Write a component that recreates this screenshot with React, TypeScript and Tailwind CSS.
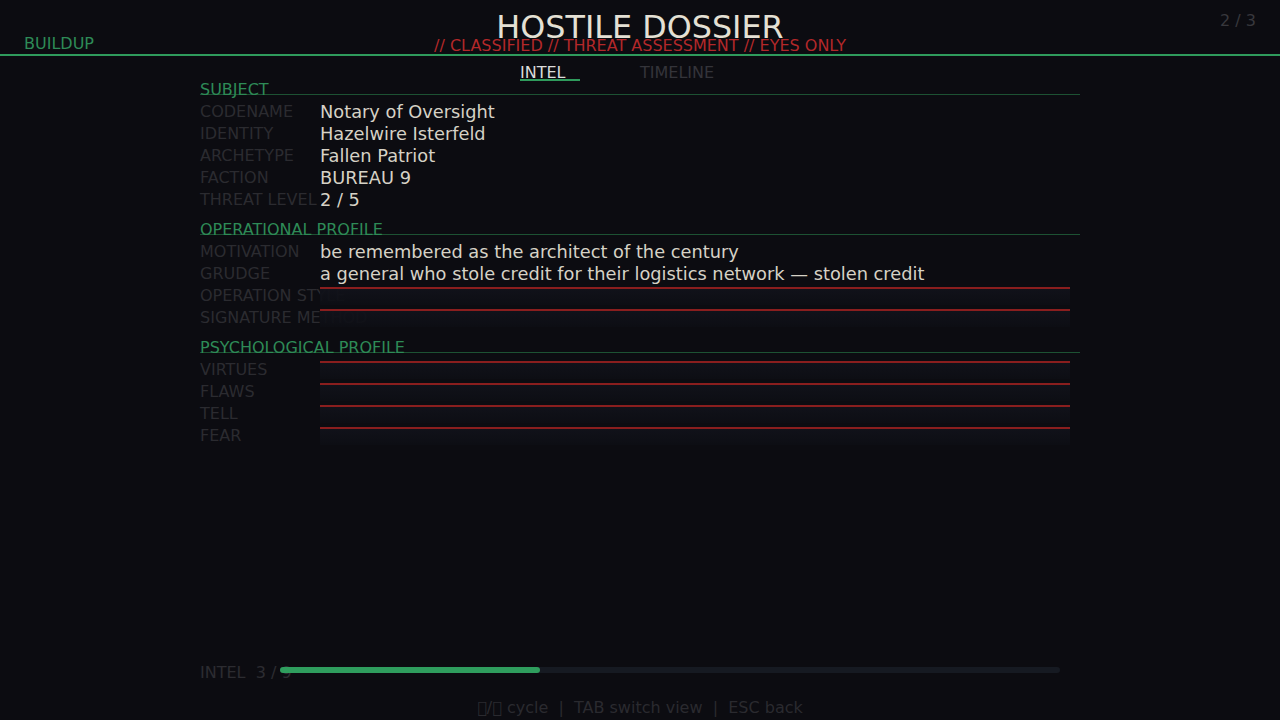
import React from "react";

type Row = { label: string; value?: string };
type Section = { title: string; rows: Row[] };

const sections: Section[] = [
  {
    title: "SUBJECT",
    rows: [
      { label: "CODENAME", value: "Notary of Oversight" },
      { label: "IDENTITY", value: "Hazelwire Isterfeld" },
      { label: "ARCHETYPE", value: "Fallen Patriot" },
      { label: "FACTION", value: "BUREAU 9" },
      { label: "THREAT LEVEL", value: "2 / 5" },
    ],
  },
  {
    title: "OPERATIONAL PROFILE",
    rows: [
      { label: "MOTIVATION", value: "be remembered as the architect of the century" },
      { label: "GRUDGE", value: "a general who stole credit for their logistics network \u2014 stolen credit" },
      { label: "OPERATION STYLE" },
      { label: "SIGNATURE METHOD" },
    ],
  },
  {
    title: "PSYCHOLOGICAL PROFILE",
    rows: [{ label: "VIRTUES" }, { label: "FLAWS" }, { label: "TELL" }, { label: "FEAR" }],
  },
];

function DossierRow({ row }: { row: Row }) {
  return (
    <div className="flex h-[22px] leading-[22px]">
      <div className="w-[120px] shrink-0 whitespace-nowrap text-[#2b2b30]">{row.label}</div>
      {row.value ? (
        <div className="flex-1 whitespace-nowrap text-[17.8px] text-[#d6d2c6]">{row.value}</div>
      ) : (
        // empty field: sits over any label overflow
        <div className="relative mt-[2px] mr-[10px] h-[18px] flex-1 border-t-2 border-[#8a1e1e] bg-gradient-to-b from-[#11121a]/95 to-[#0d0e14]/90" />
      )}
    </div>
  );
}

export default function App() {
  return (
    <div
      className="flex h-screen w-full flex-col overflow-hidden bg-[#0c0c11] text-[16px]"
      style={{ fontFamily: '"DejaVu Sans", Verdana, sans-serif' }}
    >
      <header className="flex h-[56px] shrink-0 border-b-2 border-[#2f9b5c]">
        <div className="w-[200px] pl-6 pt-[36px] leading-none text-[#2e8b57]">BUILDUP</div>
        <div className="flex flex-1 flex-col items-center pt-[11px]">
          <div className="text-[31.8px] leading-none text-[#e4e0d4]">HOSTILE DOSSIER</div>
          <div className="-mt-[5px] leading-none text-[#b3282a]">
            // CLASSIFIED // THREAT ASSESSMENT // EYES ONLY
          </div>
        </div>
        <div className="w-[200px] pr-6 pt-[13px] text-right leading-none text-[#38383d]">2 / 3</div>
      </header>

      <div className="mt-[10px] flex h-[15px] items-start justify-center">
        <div className="w-[120px]">
          <div className="w-[60px] border-b-2 border-[#2f9b5c] leading-[13px] text-[#dcdcdc]">INTEL</div>
        </div>
        <div className="w-[120px] leading-[13px] text-[#34343a]">TIMELINE</div>
      </div>

      <main className="mx-auto mt-[1px] w-[880px]">
        {sections.map((s, i) => (
          <section key={s.title} className={i === 0 ? "" : "mt-[11px]"}>
            <div className="h-[13px] border-b border-[#1d5233] leading-none whitespace-nowrap text-[#2e8b57]">
              {s.title}
            </div>
            <div className="mt-[6px]">
              {s.rows.map((r) => (
                <DossierRow key={r.label} row={r} />
              ))}
            </div>
          </section>
        ))}
      </main>

      <div className="flex-1" />

      <div className="mx-auto flex h-[16px] w-[880px] leading-none">
        <div className="w-[80px] shrink-0 whitespace-pre text-[#2c2c31]">INTEL  3 / 9</div>
        <div className="relative mt-[2px] h-[6px] w-[780px] rounded-full bg-[#161a22]">
          <div className="h-full w-1/3 rounded-full bg-[#2f9e5e]" />
        </div>
      </div>

      <div className="mt-[19px] mb-[4px] whitespace-pre text-center leading-none text-[#2a2a2f]">
        {"\uE000/\uE001 cycle  |  TAB switch view  |  ESC back"}
      </div>
    </div>
  );
}
